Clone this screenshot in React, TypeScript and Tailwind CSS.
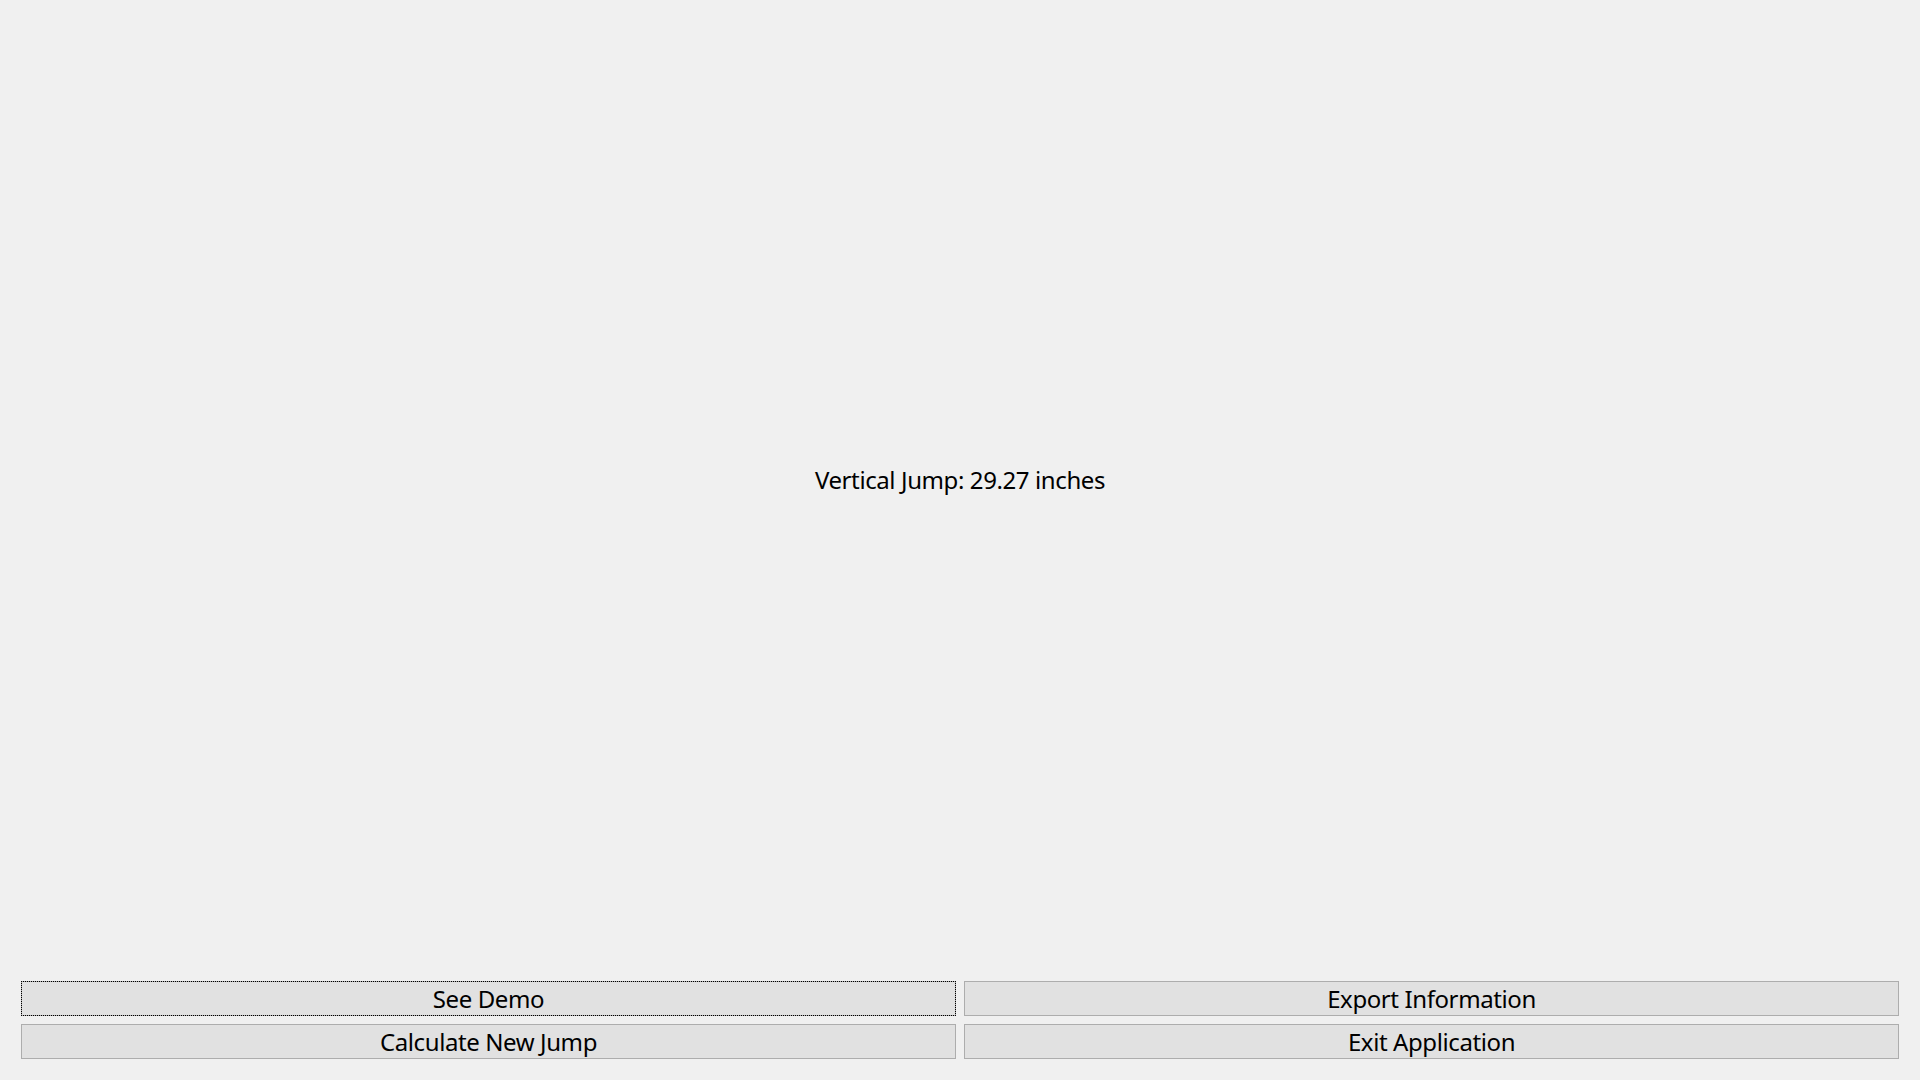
import React from "react";

export default function App() {
  const btn =
    "h-[35px] bg-[#e1e1e1] border border-[#adadad] text-[24px] leading-none tracking-[-0.4px] text-black flex items-center justify-center";
  return (
    <div
      className="w-full h-screen bg-[#f0f0f0] flex flex-col"
      style={{ fontFamily: '"Noto Sans", "Open Sans", sans-serif' }}
    >
      <div className="flex-1 flex items-center justify-center">
        <span className="text-[24px] text-black leading-none tracking-[-0.4px]">Vertical Jump: 29.27 inches</span>
      </div>
      <div className="grid grid-cols-2 gap-2 px-[21px] pt-[21px] pb-[21px]">
        <button className={btn + " outline outline-1 outline-dotted outline-black -outline-offset-1"}>See Demo</button>
        <button className={btn}>Export Information</button>
        <button className={btn}>Calculate New Jump</button>
        <button className={btn}>Exit Application</button>
      </div>
    </div>
  );
}
